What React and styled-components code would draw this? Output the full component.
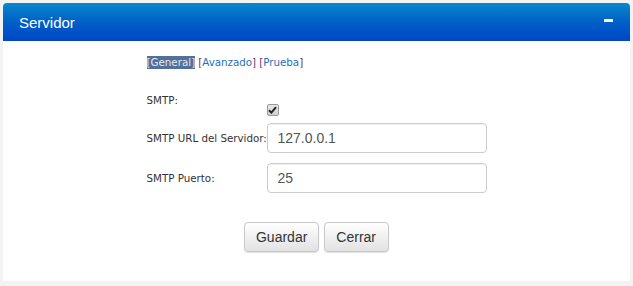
import React from 'react'
import styled, { createGlobalStyle } from 'styled-components'

const GlobalStyle = createGlobalStyle`
    html, body {
        margin: 0;
        padding: 0;
        background: #f3f3f3;
        font-family: "Liberation Sans", Arial, sans-serif;
    }
`

/* Panel */
const Panel = styled.div`
    margin: 3px 3px 0 3px;
    width: 627px;
    background: #fff;
    border-radius: 4px 4px 0 0;
`

const PanelHeader = styled.div`
    height: 38px;
    display: flex;
    align-items: center;
    justify-content: space-between;
    padding: 0 16px 0 16px;
    border-radius: 4px 4px 0 0;
    background: linear-gradient(to bottom, #0a87cc 0%, #0060c6 50%, #0045c8 100%);
    color: #fff;
    box-sizing: border-box;
`

const Title = styled.span`
    font-size: 15px;
    padding-top: 1px;
`

const Minus = styled.span`
    width: 9px;
    height: 3px;
    background: #fff;
    margin-top: -4px;
    margin-right: 1px;
`

const PanelBody = styled.div`
    height: 240px;
    display: flex;
    flex-direction: column;
    align-items: center;
    padding-top: 15px;
    box-sizing: border-box;
`

const Content = styled.div`
    width: 340px;
`

/* Pestañas */
const Tabs = styled.div`
    font-family: "DejaVu Sans", Verdana, sans-serif;
    font-size: 10.3px;
    color: #663366;
    height: 13px;
    line-height: 13px;
    display: flex;
    gap: 3px;
`

const Tab = styled.span`
    color: ${p => p.active ? '#e4e8f0' : '#663366'};
    background: ${p => p.active ? '#52709c' : 'transparent'};
    a {
        color: ${p => p.active ? '#e4e8f0' : '#1f6fb8'};
        text-decoration: none;
    }
`

/* Formulario */
const Form = styled.div`
    margin-top: 25px;
    display: grid;
    grid-template-columns: 120px 220px;
    row-gap: 10px;
`

const Label = styled.div`
    font-family: "DejaVu Sans", Verdana, sans-serif;
    font-size: 10.3px;
    color: #333;
    align-self: ${p => p.top ? 'start' : 'center'};
    white-space: nowrap;
`

const CheckCell = styled.div`
    padding-top: 10px;
    margin-bottom: -3px;
    height: 12px;
    display: flex;
    align-items: center;
`

const Check = styled.span`
    width: 12px;
    height: 12px;
    box-sizing: border-box;
    border: 1px solid #9a9a9a;
    border-radius: 2px;
    background: linear-gradient(#e8e8e8, #cfcfcf);
    display: flex;
    align-items: center;
    justify-content: center;
`

const Input = styled.input`
    width: 220px;
    height: 30px;
    box-sizing: border-box;
    border: 1px solid #cccccc;
    border-radius: 4px;
    padding: 0 10px;
    font-family: "Liberation Sans", Arial, sans-serif;
    font-size: 14px;
    color: #555;
    outline: none;
    box-shadow: inset 0 1px 1px rgba(0,0,0,0.06);
`

const Buttons = styled.div`
    margin-top: 29px;
    display: flex;
    gap: 5px;
    justify-content: center;
`

const Button = styled.button`
    height: 30px;
    padding: 0 ${p => p.pad}px;
    border: 1px solid #c8c8c8;
    border-radius: 4px;
    background: linear-gradient(to bottom, #ffffff 0%, #e2e2e2 100%);
    box-shadow: 0 1px 1px rgba(0,0,0,0.12);
    font-family: "Liberation Sans", Arial, sans-serif;
    font-size: 14px;
    color: #333;
`

const App = () => {
    return (
        <>
            <GlobalStyle />
            <Panel>
                <PanelHeader>
                    <Title>Servidor</Title>
                    <Minus />
                </PanelHeader>
                <PanelBody>
                    <Content>
                        <Tabs>
                            <Tab active>[<a href="#g">General</a>]</Tab>
                            <Tab>[<a href="#a">Avanzado</a>]</Tab>
                            <Tab>[<a href="#p">Prueba</a>]</Tab>
                        </Tabs>
                        <Form>
                            <Label top>SMTP:</Label>
                            <CheckCell>
                                <Check>
                                    <svg width="9" height="8" viewBox="0 0 9 8">
                                        <path d="M1 4.2 L3.4 6.6 L8 1.2" stroke="#222" strokeWidth="2" fill="none" />
                                    </svg>
                                </Check>
                            </CheckCell>
                            <Label>SMTP URL del Servidor:</Label>
                            <Input defaultValue="127.0.0.1" />
                            <Label>SMTP Puerto:</Label>
                            <Input defaultValue="25" />
                        </Form>
                        <Buttons>
                            <Button pad={10.5}>Guardar</Button>
                            <Button pad={11.5}>Cerrar</Button>
                        </Buttons>
                    </Content>
                </PanelBody>
            </Panel>
        </>
    )
}

export default App
